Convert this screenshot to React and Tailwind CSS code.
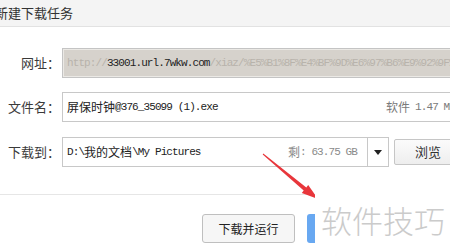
import React from 'react';

const Mono = ({ children, className = '' }) => (
  <span className={`font-['Liberation_Mono',monospace] text-[11px] tracking-[-0.9px] ${className}`}>{children}</span>
);

const Cjk = ({ children, className = '' }) => (
  <span className={`text-[12px] ${className}`}>{children}</span>
);

const Label = ({ children }) => (
  <div className="w-[60px] shrink-0 text-right text-[13px] text-[#3a3a3a]">{children}</div>
);

const App = () => {
  return (
    <div className="relative w-[450px] h-[252px] overflow-hidden bg-white font-['Noto_Sans_CJK_SC',sans-serif] text-[#333]">
      {/* Title bar */}
      <div className="h-[27px] bg-[#f4f4f4] border-b border-[#e2e2e2] flex items-center">
        <span className="-ml-[5px] text-[13px] text-[#333] whitespace-nowrap">新建下载任务</span>
      </div>

      <div className="flex flex-col pt-[21px]">
        {/* URL row */}
        <div className="flex items-center">
          <Label>网址：</Label>
          <div className="ml-[2px] w-[400px] h-[30px] shrink-0 border border-[#c4c4c4] bg-[#d6d2cc] shadow-[inset_0_0_0_1px_#ebe9e5] flex items-center pl-[4px] overflow-hidden whitespace-nowrap">
            <Mono className="text-[#b8b3ab]">http://</Mono>
            <Mono className="text-[#222]">33001.url.7wkw.com</Mono>
            <Mono className="text-[#b8b3ab]">/xiaz/%E5%B1%8F%E4%BF%9D%E6%97%B6%E9%92%9F%40376_35099</Mono>
          </div>
        </div>

        {/* File name row */}
        <div className="flex items-center mt-[14px]">
          <Label>文件名：</Label>
          <div className="ml-[2px] w-[400px] h-[30px] shrink-0 border border-[#c8c8c8] bg-white flex items-center justify-between pl-[4px] pr-[6px] whitespace-nowrap">
            <div className="flex items-center">
              <Cjk className="text-[#222]">屏保时钟</Cjk>
              <Mono className="text-[#222]">@376_35099 (1).exe</Mono>
            </div>
            <div className="flex items-center text-[#7a7a7a]">
              <Cjk>软件</Cjk>
              <Mono className="ml-[5px]">1.47 MB</Mono>
            </div>
          </div>
        </div>

        {/* Save to row */}
        <div className="flex items-center mt-[15px]">
          <Label>下载到：</Label>
          <div className="ml-[2px] w-[327px] h-[30px] shrink-0 border border-[#c8c8c8] bg-white flex whitespace-nowrap">
            <div className="flex-1 flex items-center justify-between pl-[4px] pr-[10px]">
              <div className="flex items-center text-[#222]">
                <Mono>D:\</Mono>
                <Cjk>我的文档</Cjk>
                <Mono>\My Pictures</Mono>
              </div>
              <div className="flex items-center text-[#8a8a8a]">
                <Cjk>剩</Cjk>
                <Mono>: 63.75 GB</Mono>
              </div>
            </div>
            <div className="w-[21px] border-l border-[#c8c8c8] flex items-center justify-center">
              <svg width="8" height="5" viewBox="0 0 8 5">
                <path d="M0 0H8L4 5Z" fill="#222" />
              </svg>
            </div>
          </div>
          <button className="ml-[5px] w-[68px] h-[26px] shrink-0 border border-[#c6c6c6] rounded-[2px] bg-gradient-to-b from-[#fbfbfb] to-[#eeeeee] text-[13px] text-[#333]">
            浏览
          </button>
        </div>

        {/* Divider */}
        <div className="mt-[27px] h-px bg-[#e6e6e6]" />

        {/* Action buttons */}
        <div className="flex mt-[19px] pl-[202px]">
          <button className="w-[93px] h-[29px] shrink-0 border border-[#bfbfbf] rounded-[3px] bg-[#f6f6f6] text-[12px] text-[#222]">
            下载并运行
          </button>
          <div className="ml-[12px] w-[93px] h-[29px] shrink-0 rounded-[3px] bg-[#68a8f1]" />
        </div>
      </div>

      {/* Red arrow annotation */}
      <svg className="absolute left-0 top-0 pointer-events-none" width="450" height="252" viewBox="0 0 450 252">
        <polygon
          points="262.7,154.4 303.7,190.5 301.8,192.9 318,199 308.2,185.1 306.3,187.5 263.3,153.6"
          fill="#e8363b"
        />
      </svg>

      {/* Watermark */}
      <div className="absolute left-[315px] top-[186px] right-0 bottom-0 bg-white flex items-center pl-[6px]">
        <span className="text-[31px] font-light leading-none text-[#cbcbcb] whitespace-nowrap">软件技巧</span>
      </div>
    </div>
  );
};

export default App;
